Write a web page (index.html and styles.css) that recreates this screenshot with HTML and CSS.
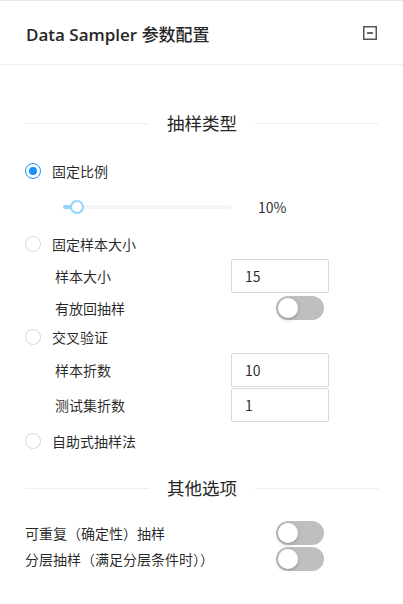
FILE: index.html
```html
<!DOCTYPE html>
<html lang="zh">
<head>
<meta charset="utf-8">
<link rel="stylesheet" href="styles.css">
</head>
<body>
<div class="panel">
  <div class="header">
    <div class="title">Data Sampler <span class="title-cjk">参数配置</span></div>
    <svg class="collapse" width="14" height="14" viewBox="0 0 14 14"><rect x="0.75" y="0.75" width="12.5" height="12.5" fill="none" stroke="#555" stroke-width="1.5"/><line x1="4" y1="7" x2="10" y2="7" stroke="#333" stroke-width="1.5"/></svg>
  </div>
  <div class="content">
    <div class="divider d1"><span class="line"></span><span class="dtext">抽样类型</span><span class="line"></span></div>

    <div class="radio-row r1"><span class="radio checked"></span><span class="rtext">固定比例</span></div>
    <div class="slider-row">
      <div class="slider"><div class="fill"></div><div class="thumb"></div></div>
      <span class="pct">10%</span>
    </div>

    <div class="radio-row r2"><span class="radio"></span><span class="rtext">固定样本大小</span></div>
    <div class="field-row f1"><span class="flabel">样本大小</span><div class="input">15</div></div>
    <div class="switch-row s1"><span class="flabel">有放回抽样</span><span class="switch"></span></div>

    <div class="radio-row r3"><span class="radio"></span><span class="rtext">交叉验证</span></div>
    <div class="field-row f2"><span class="flabel">样本折数</span><div class="input">10</div></div>
    <div class="field-row f3"><span class="flabel">测试集折数</span><div class="input">1</div></div>

    <div class="radio-row r4"><span class="radio"></span><span class="rtext">自助式抽样法</span></div>

    <div class="divider d2"><span class="line"></span><span class="dtext">其他选项</span><span class="line"></span></div>

    <div class="opt-row o1"><span class="otext">可重复（确定性）抽样</span><span class="switch"></span></div>
    <div class="opt-row o2"><span class="otext">分层抽样（满足分层条件时））</span><span class="switch"></span></div>
  </div>
</div>
</body>
</html>
```
FILE: styles.css
```css
* { box-sizing: border-box; }
html, body { margin: 0; padding: 0; background: #fff; }
body {
  font-family: "Noto Sans CJK SC", "Noto Sans", sans-serif;
  color: rgba(0,0,0,0.85);
  font-size: 14px;
}
.panel { width: 403px; border-top: 1px solid #e8e8e8; }
.header {
  height: 64px;
  display: flex;
  align-items: center;
  justify-content: space-between;
  padding: 0 26px;
  border-bottom: 1px solid #eeeeee;
}
.title {
  font-family: "Open Sans", "Noto Sans CJK SC", sans-serif;
  font-size: 17px;
  font-weight: 600;
  color: #262626;
  margin-top: 1px;
}
.title-cjk { font-family: "Noto Sans CJK SC", sans-serif; font-weight: 500; }
.collapse { display: block; margin-top: 1px; }
.content { padding: 0 24px 0 25px; display: flex; flex-direction: column; }

.divider { display: flex; align-items: center; height: 24px; }
.divider .line { flex: 1; height: 1px; background: #efefef; }
.dtext { font-size: 17.5px; padding: 0 18px; line-height: 24px; color: #262626; }
.d1 { margin-top: 46px; }
.d2 { margin-top: 23px; }

.radio-row { display: flex; align-items: center; height: 24px; }
.radio {
  width: 16px; height: 16px; border-radius: 50%;
  border: 1px solid #d9d9d9; background: #fff;
  position: relative; flex: none;
}
.radio.checked { border-color: #1890ff; }
.radio.checked::after {
  content: ""; position: absolute; left: 3px; top: 3px;
  width: 8px; height: 8px; border-radius: 50%; background: #1890ff;
}
.rtext { margin-left: 11px; line-height: 22px; }
.r1 { margin-top: 24px; }
.r2 { margin-top: 13px; }
.r3 { margin-top: 5px; }
.r4 { margin-top: 7px; }

.slider-row { display: flex; align-items: center; height: 24px; margin-top: 12px; padding-left: 38px; }
.slider { position: relative; width: 169px; height: 4px; background: #f5f5f5; border-radius: 2px; }
.slider .fill { position: absolute; left: 0; top: 0; height: 4px; width: 14px; background: #91d5ff; border-radius: 2px; }
.slider .thumb {
  position: absolute; left: 7px; top: -5px;
  width: 14px; height: 14px; border-radius: 50%;
  border: 2px solid #91d5ff; background: #fff;
}
.pct { margin-left: 26px; }

.field-row { display: flex; align-items: center; height: 34px; padding-left: 30px; }
.field-row .flabel { width: 176px; }
.input {
  width: 98px; height: 34px; border: 1px solid #d9d9d9; border-radius: 2px;
  padding-left: 13px; line-height: 32px;
}
.f1 { margin-top: 3px; }
.f2 { margin-top: 4px; }
.f3 { margin-top: 1px; }

.switch-row { display: flex; align-items: center; height: 24px; margin-top: 3px; padding-left: 30px; }
.switch-row .flabel { width: 221px; }

.switch {
  position: relative; display: block; flex: none;
  width: 48px; height: 24px; border-radius: 12px; background: #bfbfbf;
}
.switch::after {
  content: ""; position: absolute; left: 2px; top: 2px;
  width: 20px; height: 20px; border-radius: 50%; background: #fff;
  box-shadow: 0 2px 4px rgba(0,35,11,0.2);
}

.opt-row { display: flex; align-items: center; height: 24px; }
.opt-row .otext { width: 251px; white-space: nowrap; }
.o1 { margin-top: 21px; }
.o2 { margin-top: 2px; }
```
